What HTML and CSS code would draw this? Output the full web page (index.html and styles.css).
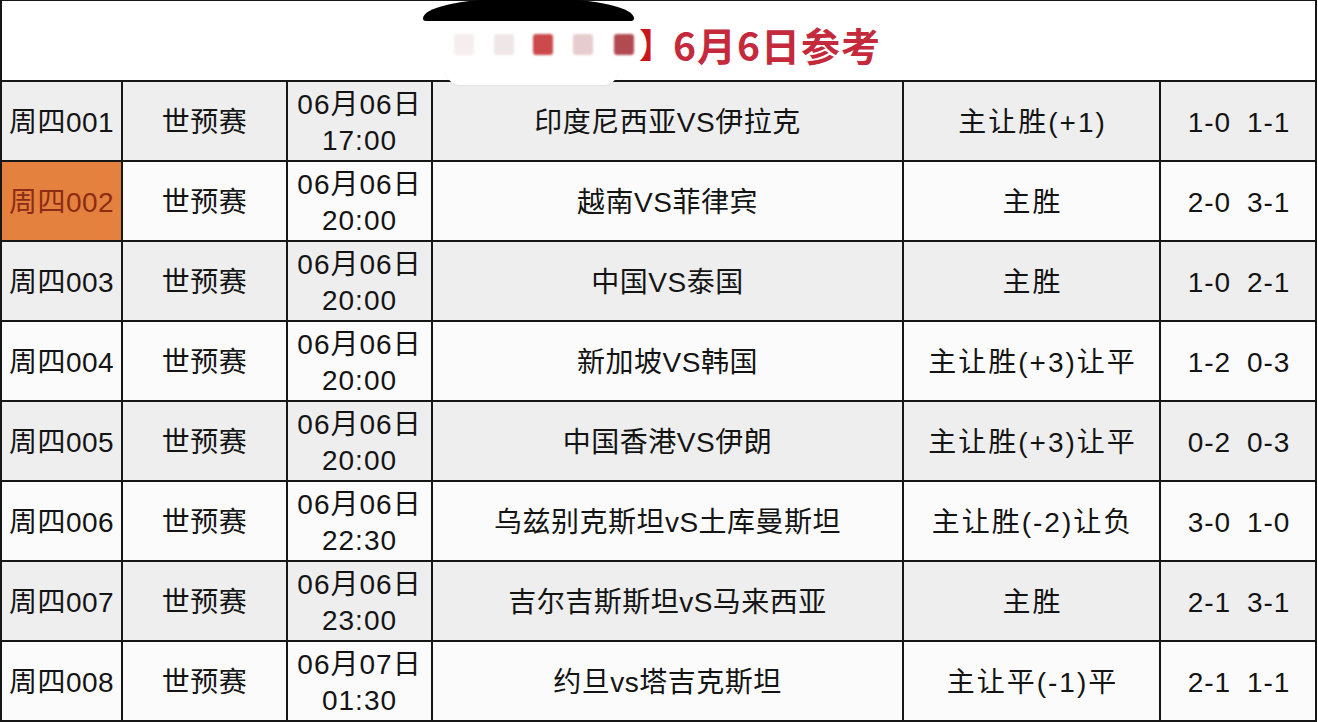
FILE: index.html
```html
<!DOCTYPE html>
<html lang="zh-CN">
<head>
<meta charset="utf-8">
<title>6月6日参考</title>
<link rel="stylesheet" href="styles.css">
</head>
<body>
<div class="sheet">
  <table class="grid">
    <colgroup>
      <col class="c1"><col class="c2"><col class="c3"><col class="c4"><col class="c5"><col class="c6">
    </colgroup>
    <tr class="title-row">
      <td colspan="6" class="title-cell">
        <div class="title-wrap">
          <span class="blob"></span>
          <span class="patch"></span>
          <div class="title">
            <span class="sq s1"></span><span class="sq s2"></span><span class="sq s3"></span><span class="sq s4"></span><span class="sq s5"></span>
            <span class="bracket">】</span><span class="title-text">6月6日参考</span>
          </div>
        </div>
      </td>
    </tr>
    <tr class="odd">
      <td>周四001</td><td>世预赛</td><td class="date"><span class="ln">06月06日</span><span class="ln">17:00</span></td><td>印度尼西亚VS伊拉克</td><td class="res">主让胜(+1)</td><td class="score">1-0 1-1</td>
    </tr>
    <tr class="even">
      <td class="hl">周四002</td><td>世预赛</td><td class="date"><span class="ln">06月06日</span><span class="ln">20:00</span></td><td>越南VS菲律宾</td><td class="res">主胜</td><td class="score">2-0 3-1</td>
    </tr>
    <tr class="odd">
      <td>周四003</td><td>世预赛</td><td class="date"><span class="ln">06月06日</span><span class="ln">20:00</span></td><td>中国VS泰国</td><td class="res">主胜</td><td class="score">1-0 2-1</td>
    </tr>
    <tr class="even">
      <td>周四004</td><td>世预赛</td><td class="date"><span class="ln">06月06日</span><span class="ln">20:00</span></td><td>新加坡VS韩国</td><td class="res">主让胜(+3)让平</td><td class="score">1-2 0-3</td>
    </tr>
    <tr class="odd">
      <td>周四005</td><td>世预赛</td><td class="date"><span class="ln">06月06日</span><span class="ln">20:00</span></td><td>中国香港VS伊朗</td><td class="res">主让胜(+3)让平</td><td class="score">0-2 0-3</td>
    </tr>
    <tr class="even">
      <td>周四006</td><td>世预赛</td><td class="date"><span class="ln">06月06日</span><span class="ln">22:30</span></td><td>乌兹别克斯坦vS土库曼斯坦</td><td class="res">主让胜(-2)让负</td><td class="score">3-0 1-0</td>
    </tr>
    <tr class="odd">
      <td>周四007</td><td>世预赛</td><td class="date"><span class="ln">06月06日</span><span class="ln">23:00</span></td><td>吉尔吉斯斯坦vS马来西亚</td><td class="res">主胜</td><td class="score">2-1 3-1</td>
    </tr>
    <tr class="even">
      <td>周四008</td><td>世预赛</td><td class="date"><span class="ln">06月07日</span><span class="ln">01:30</span></td><td>约旦vs塔吉克斯坦</td><td class="res">主让平(-1)平</td><td class="score">2-1 1-1</td>
    </tr>
  </table>
</div>
</body>
</html>
```

FILE: styles.css
```css
html, body {
  margin: 0;
  padding: 0;
  background: #ffffff;
}
body {
  font-family: "Noto Sans CJK SC", "Noto Sans", sans-serif;
  color: #141414;
  width: 1318px;
  height: 722px;
  overflow: hidden;
}
.grid {
  border-collapse: collapse;
  table-layout: fixed;
  width: 1317px;
}
.c1 { width: 121px; }
.c2 { width: 165px; }
.c3 { width: 145px; }
.c4 { width: 471px; }
.c5 { width: 257px; }
.c6 { width: 156px; }

.grid td {
  border: 2px solid #161616;
  height: 75px;
  padding: 3px 0 0 0;
  text-align: center;
  vertical-align: middle;
  font-family: "Liberation Sans", "Noto Sans CJK SC", sans-serif;
  font-size: 28px;
  line-height: 36px;
  white-space: nowrap;
  letter-spacing: 0.5px;
}
.odd td { background: #eeeeee; }
.even td { background: #fbfbfb; }
.grid td.hl {
  background: #e5813e;
  color: #8c2c14;
}
.grid td.date {
  padding-top: 0;
  height: 78px;
}
.ln {
  display: block;
  height: 36px;
  line-height: 36px;
  letter-spacing: 1px;
}
.ln:first-child {
  margin-top: 3px;
}
.grid td.res {
  letter-spacing: 2px;
  padding-left: 2px;
}
.grid td.score {
  word-spacing: 7px;
  letter-spacing: 1px;
  padding-left: 2px;
}

.title-row td.title-cell {
  height: 79px;
  background: #ffffff;
  padding: 0;
  border-top-width: 1px;
}
.title-wrap {
  position: relative;
  height: 79px;
}
.blob {
  position: absolute;
  left: 421px;
  top: -2px;
  width: 211px;
  height: 22px;
  background: #000000;
  border-radius: 45% 45% 3px 3px / 100% 100% 3px 3px;
}
.patch {
  position: absolute;
  left: 444px;
  top: 20px;
  width: 172px;
  height: 64px;
  background: #ffffff;
  border-radius: 0 0 14px 14px;
  box-shadow: 0 1px 2px rgba(0,0,0,0.06);
  z-index: 2;
}
.title {
  position: absolute;
  left: 452px;
  top: 19px;
  display: flex;
  align-items: center;
  z-index: 3;
}
.sq {
  display: inline-block;
  width: 20px;
  height: 21px;
  margin-right: 20px;
  border-radius: 3px;
  filter: blur(1px);
}
.s1 { background: #f6eeee; }
.s2 { background: #efe6e8; margin-right: 19px; }
.s3 { background: #cc4a4c; }
.s4 { background: #e6ccce; margin-right: 21px; }
.s5 { background: #b24a52; margin-right: 5px; }
.bracket {
  font-family: "Noto Sans CJK SC", sans-serif;
  font-size: 34px;
  font-weight: 700;
  color: #c8151e;
  line-height: 48px;
  letter-spacing: 0;
}
.title-text {
  font-family: "Noto Sans CJK SC", sans-serif;
  font-size: 39px;
  font-weight: 700;
  color: #c42a3c;
  line-height: 48px;
  letter-spacing: 1px;
}
```
